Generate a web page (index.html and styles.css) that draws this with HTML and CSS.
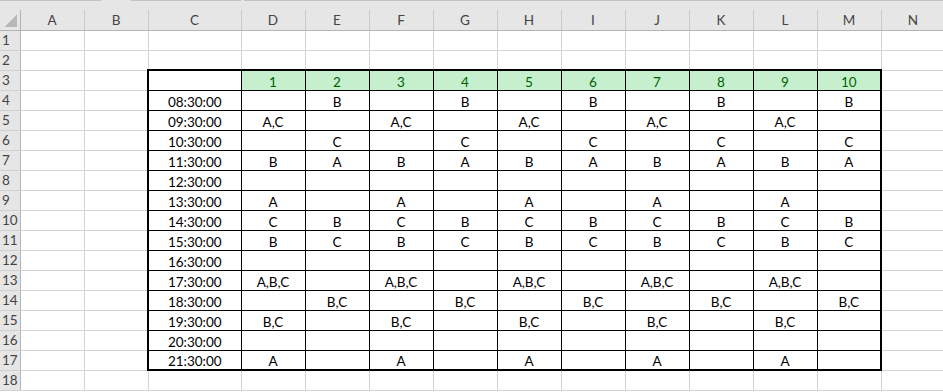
FILE: index.html
```
<!DOCTYPE html>
<html>
<head>
<meta charset="utf-8">
<link rel="stylesheet" href="styles.css">
</head>
<body>
<div class="topstrip"><span class="seg s1"></span><span class="gap g1"></span><span class="seg s2"></span><span class="gap g2"></span><span class="seg s3"></span></div>
<table class="sheet">
<colgroup><col class="c-rh"><col class="c-n"><col class="c-n"><col class="c-c"><col class="c-n"><col class="c-n"><col class="c-n"><col class="c-n"><col class="c-n"><col class="c-n"><col class="c-n"><col class="c-n"><col class="c-n"><col class="c-n"><col class="c-n"></colgroup>
<tr class="colhdr"><th class="corner"></th><th>A</th><th>B</th><th>C</th><th>D</th><th>E</th><th>F</th><th>G</th><th>H</th><th>I</th><th>J</th><th>K</th><th>L</th><th>M</th><th>N</th></tr>
<tr><th class="rh">1</th><td></td><td></td><td></td><td></td><td></td><td></td><td></td><td></td><td></td><td></td><td></td><td></td><td></td><td></td></tr>
<tr><th class="rh">2</th><td></td><td></td><td></td><td></td><td></td><td></td><td></td><td></td><td></td><td></td><td></td><td></td><td></td><td></td></tr>
<tr><th class="rh">3</th><td></td><td></td><td class="t tl tt"></td><td class="t tt hd">1</td><td class="t tt hd">2</td><td class="t tt hd">3</td><td class="t tt hd">4</td><td class="t tt hd">5</td><td class="t tt hd">6</td><td class="t tt hd">7</td><td class="t tt hd">8</td><td class="t tt hd">9</td><td class="t tt tr hd">10</td><td></td></tr>
<tr><th class="rh">4</th><td></td><td></td><td class="t tl">08:30:00</td><td class="t"></td><td class="t">B</td><td class="t"></td><td class="t">B</td><td class="t"></td><td class="t">B</td><td class="t"></td><td class="t">B</td><td class="t"></td><td class="t tr">B</td><td></td></tr>
<tr><th class="rh">5</th><td></td><td></td><td class="t tl">09:30:00</td><td class="t">A,C</td><td class="t"></td><td class="t">A,C</td><td class="t"></td><td class="t">A,C</td><td class="t"></td><td class="t">A,C</td><td class="t"></td><td class="t">A,C</td><td class="t tr"></td><td></td></tr>
<tr><th class="rh">6</th><td></td><td></td><td class="t tl">10:30:00</td><td class="t"></td><td class="t">C</td><td class="t"></td><td class="t">C</td><td class="t"></td><td class="t">C</td><td class="t"></td><td class="t">C</td><td class="t"></td><td class="t tr">C</td><td></td></tr>
<tr><th class="rh">7</th><td></td><td></td><td class="t tl">11:30:00</td><td class="t">B</td><td class="t">A</td><td class="t">B</td><td class="t">A</td><td class="t">B</td><td class="t">A</td><td class="t">B</td><td class="t">A</td><td class="t">B</td><td class="t tr">A</td><td></td></tr>
<tr><th class="rh">8</th><td></td><td></td><td class="t tl">12:30:00</td><td class="t"></td><td class="t"></td><td class="t"></td><td class="t"></td><td class="t"></td><td class="t"></td><td class="t"></td><td class="t"></td><td class="t"></td><td class="t tr"></td><td></td></tr>
<tr><th class="rh">9</th><td></td><td></td><td class="t tl">13:30:00</td><td class="t">A</td><td class="t"></td><td class="t">A</td><td class="t"></td><td class="t">A</td><td class="t"></td><td class="t">A</td><td class="t"></td><td class="t">A</td><td class="t tr"></td><td></td></tr>
<tr><th class="rh">10</th><td></td><td></td><td class="t tl">14:30:00</td><td class="t">C</td><td class="t">B</td><td class="t">C</td><td class="t">B</td><td class="t">C</td><td class="t">B</td><td class="t">C</td><td class="t">B</td><td class="t">C</td><td class="t tr">B</td><td></td></tr>
<tr><th class="rh">11</th><td></td><td></td><td class="t tl">15:30:00</td><td class="t">B</td><td class="t">C</td><td class="t">B</td><td class="t">C</td><td class="t">B</td><td class="t">C</td><td class="t">B</td><td class="t">C</td><td class="t">B</td><td class="t tr">C</td><td></td></tr>
<tr><th class="rh">12</th><td></td><td></td><td class="t tl">16:30:00</td><td class="t"></td><td class="t"></td><td class="t"></td><td class="t"></td><td class="t"></td><td class="t"></td><td class="t"></td><td class="t"></td><td class="t"></td><td class="t tr"></td><td></td></tr>
<tr><th class="rh">13</th><td></td><td></td><td class="t tl">17:30:00</td><td class="t">A,B,C</td><td class="t"></td><td class="t">A,B,C</td><td class="t"></td><td class="t">A,B,C</td><td class="t"></td><td class="t">A,B,C</td><td class="t"></td><td class="t">A,B,C</td><td class="t tr"></td><td></td></tr>
<tr><th class="rh">14</th><td></td><td></td><td class="t tl">18:30:00</td><td class="t"></td><td class="t">B,C</td><td class="t"></td><td class="t">B,C</td><td class="t"></td><td class="t">B,C</td><td class="t"></td><td class="t">B,C</td><td class="t"></td><td class="t tr">B,C</td><td></td></tr>
<tr><th class="rh">15</th><td></td><td></td><td class="t tl">19:30:00</td><td class="t">B,C</td><td class="t"></td><td class="t">B,C</td><td class="t"></td><td class="t">B,C</td><td class="t"></td><td class="t">B,C</td><td class="t"></td><td class="t">B,C</td><td class="t tr"></td><td></td></tr>
<tr><th class="rh">16</th><td></td><td></td><td class="t tl">20:30:00</td><td class="t"></td><td class="t"></td><td class="t"></td><td class="t"></td><td class="t"></td><td class="t"></td><td class="t"></td><td class="t"></td><td class="t"></td><td class="t tr"></td><td></td></tr>
<tr><th class="rh">17</th><td></td><td></td><td class="t tl tb">21:30:00</td><td class="t tb">A</td><td class="t tb"></td><td class="t tb">A</td><td class="t tb"></td><td class="t tb">A</td><td class="t tb"></td><td class="t tb">A</td><td class="t tb"></td><td class="t tb">A</td><td class="t tb tr"></td><td></td></tr>
<tr><th class="rh">18</th><td></td><td></td><td></td><td></td><td></td><td></td><td></td><td></td><td></td><td></td><td></td><td></td><td></td><td></td></tr>
</table>
</body>
</html>
```
FILE: styles.css
```
html, body {
  margin: 0;
  padding: 0;
  background: #ffffff;
  overflow: hidden;
  width: 943px;
  height: 392px;
}
body {
  font-family: "Lato", "Open Sans", sans-serif;
  font-size: 13.5px;
  color: #000;
}
.topstrip {
  display: flex;
  height: 10px;
  background: #e6e6e6;
  width: 945px;
}
.seg {
  display: block;
  height: 1px;
  background: #c3c3c3;
}
.gap {
  display: block;
  height: 1px;
}
.s1 { width: 101px; }
.g1 { width: 30px; }
.s2 { width: 110px; }
.g2 { width: 3px; }
.s3 { flex: 1; }
.sheet {
  border-collapse: collapse;
  table-layout: fixed;
  width: 945px;
}
.c-rh { width: 20px; }
.c-n { width: 64px; }
.c-c { width: 93px; }
.sheet tr { height: 20px; }
.sheet th, .sheet td {
  padding: 0;
  height: 19px;
  line-height: 16px;
  box-sizing: border-box;
  white-space: nowrap;
  overflow: hidden;
}
.colhdr th {
  background: #e6e6e6;
  font-weight: normal;
  color: #444444;
  font-size: 13.5px;
  border-right: 1px solid #c9c9c9;
  border-bottom: 1px solid #b4b4b4;
  text-align: center;
  vertical-align: middle;
}
.colhdr th.corner {
  border-right: 1px solid #b4b4b4;
  background-image: linear-gradient(135deg, transparent 50%, #b8b8b8 50%);
  background-repeat: no-repeat;
  background-size: 12px 12px;
  background-position: right 3px bottom 3px;
}
th.rh {
  background: #e6e6e6;
  font-weight: normal;
  color: #444444;
  font-size: 13.5px;
  border-right: 1px solid #b4b4b4;
  border-bottom: 1px solid #d0d0d0;
  text-align: left;
  padding-left: 2px;
  vertical-align: middle;
}
.sheet td {
  border: 1px solid #d4d4d4;
  text-align: center;
  vertical-align: bottom;
  padding-bottom: 0;
}
.sheet td.t { border: 1px solid #000000; }
.sheet td.tl { border-left: 2px solid #000000; }
.sheet td.tr { border-right: 2px solid #000000; }
.sheet td.tt { border-top: 2px solid #000000; }
.sheet td.tb { border-bottom: 2px solid #000000; }
.sheet td.hd {
  background: #c6efce;
  color: #006100;
}
```
